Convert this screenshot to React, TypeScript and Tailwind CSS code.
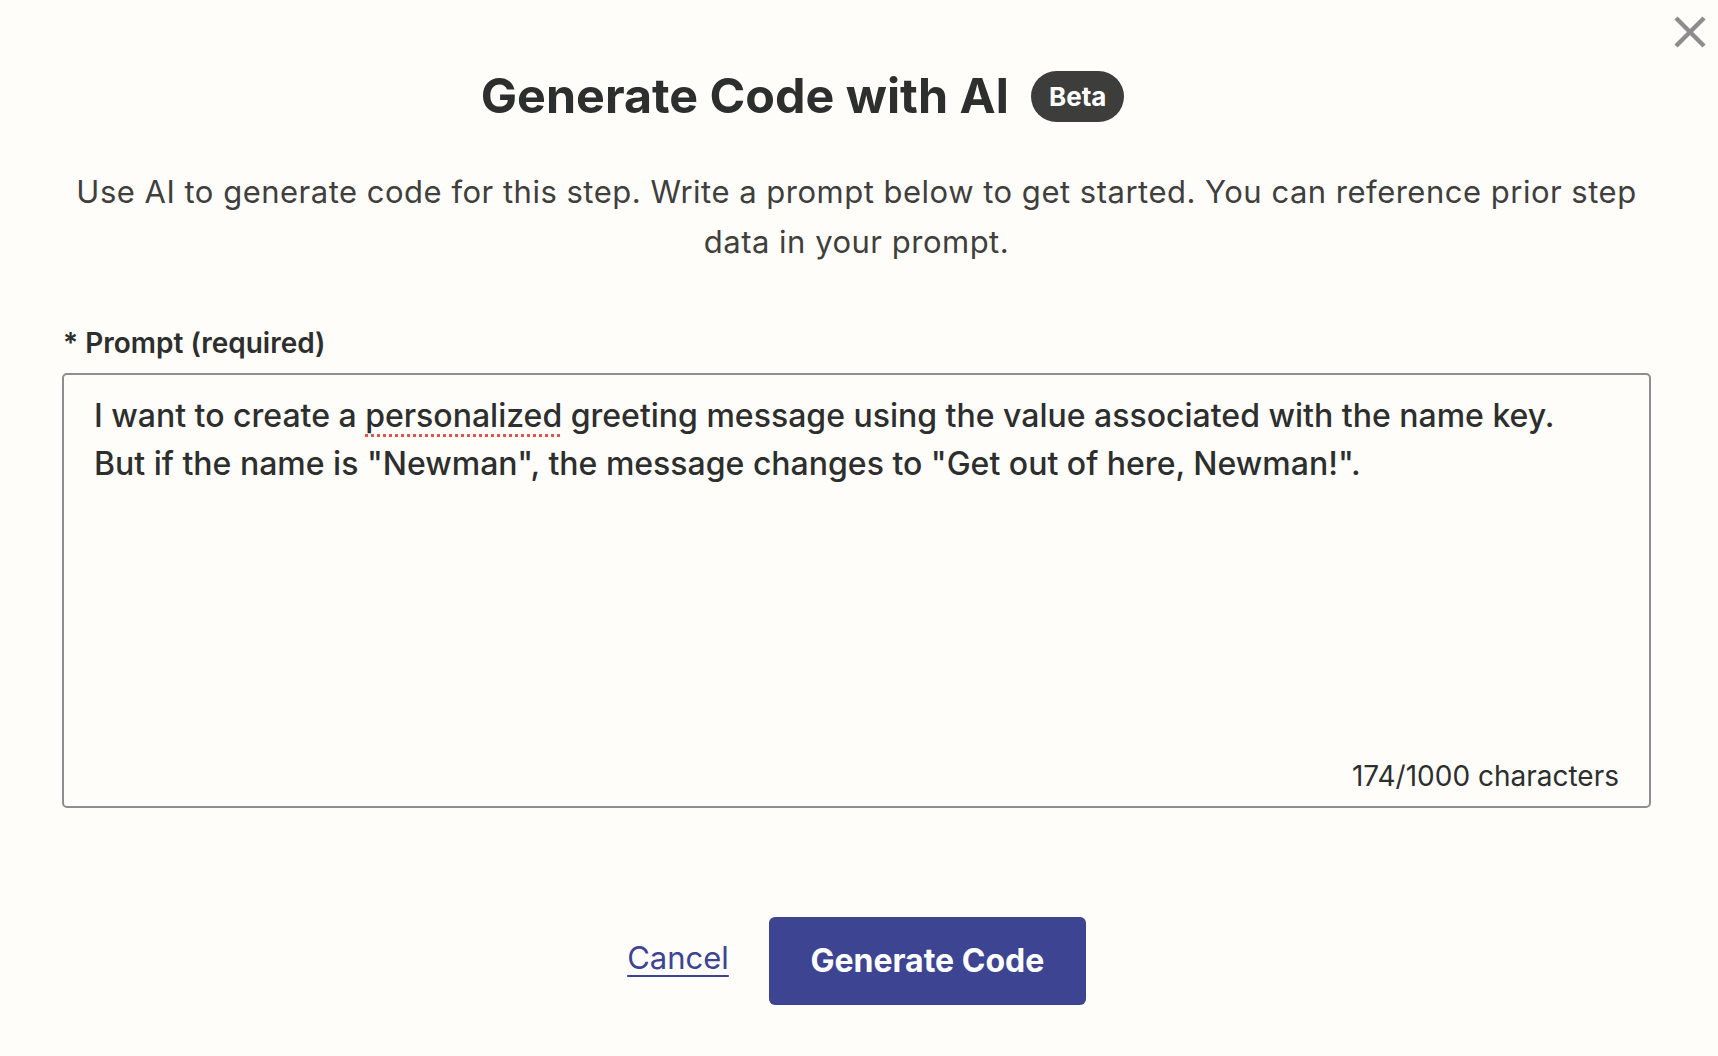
export default function App() {
  return (
    <div
      className="relative min-h-screen w-full bg-[#fffdf9] text-[#2d2e2e]"
      style={{ fontFamily: "Inter, 'Noto Sans', sans-serif" }}
    >
      {/* Close button */}
      <button className="absolute right-[12px] top-[16px] flex h-[32px] w-[32px] items-center justify-center text-[#8d8d8d]">
        <svg width="32" height="32" viewBox="0 0 32 32" fill="none">
          <path d="M2 2 L30 30 M30 2 L2 30" stroke="currentColor" strokeWidth="4.5" />
        </svg>
      </button>

      {/* Header */}
      <div className="flex items-center justify-center gap-[22px] pr-[113px] pt-[67px]">
        <h1 className="text-[48.4px] font-bold leading-[58px]">Generate Code with AI</h1>
        <span className="flex h-[51px] w-[93px] items-center justify-center rounded-full bg-[#3d3d3c] text-[26px] font-bold text-white">
          Beta
        </span>
      </div>

      <div className="ml-[62px] mr-[67px]">
        <p className="mt-[42px] text-center text-[31px] leading-[50px] tracking-[0.5px] text-[#403f3e]">
          Use AI to generate code for this step. Write a prompt below to get started. You can reference prior step
          <br />
          data in your prompt.
        </p>

        {/* Prompt field */}
        <label className="mt-[58px] block pl-[1px] text-[28px] font-semibold leading-[36px]">* Prompt (required)</label>
        <div className="mt-[12px] flex h-[435px] flex-col rounded-[5px] border-2 border-[#8f8e8d] pl-[30px] pr-[30px] pt-[17px] pb-[12px]">
          <p className="text-[32px] font-medium leading-[48px]">
            I want to create a{" "}
            <span className="underline decoration-[#e6514c] decoration-dotted decoration-[3px] underline-offset-[7px]">
              personalized
            </span>{" "}
            greeting message using the value associated with the name key.
            <br />
            But if the name is "Newman", the message changes to "Get out of here, Newman!".
          </p>
          <div className="mt-auto text-right text-[28px] leading-[36px] text-[#2d2e2e]">174/1000 characters</div>
        </div>

        {/* Actions */}
        <div className="mt-[109px] flex items-center justify-center gap-[40px]">
          <a
            href="#"
            className="mb-[6px] text-[31px] leading-[40px] text-[#3d4592] underline decoration-2 underline-offset-[6px]"
          >
            Cancel
          </a>
          <button className="flex h-[88px] w-[317px] items-center justify-center rounded-[6px] bg-[#3d4592] text-[32px] font-bold text-white">
            Generate Code
          </button>
        </div>
      </div>
    </div>
  )
}
